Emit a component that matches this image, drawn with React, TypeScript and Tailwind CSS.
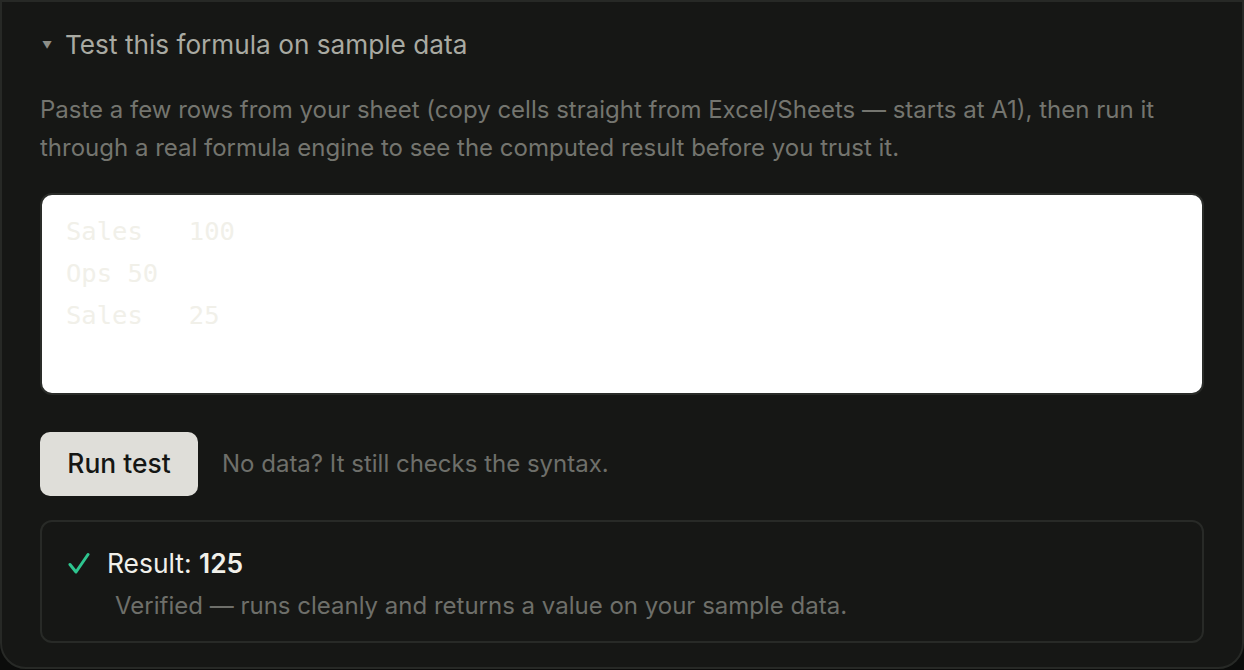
import React from "react";

export default function App() {
  return (
    <div className="w-[1244px] h-[670px] bg-[#0b0c0b] overflow-hidden" style={{ fontFamily: "Inter, 'Noto Sans', sans-serif" }}>
      <div className="h-[669px] bg-[#161715] border-2 border-[#272926] rounded-b-[26px] px-[38px] pt-[28px]">
        <div className="flex items-center h-[30px]">
          <span className="text-[#8d8e88] text-[10px] leading-none w-[25px] pl-[2px]">▼</span>
          <span className="text-[26.2px] leading-[30px] text-[#a9aaa2]">Test this formula on sample data</span>
        </div>
        <p className="mt-[31px] text-[24px] leading-[38px] text-[#74756f]">
          Paste a few rows from your sheet (copy cells straight from Excel/Sheets — starts at A1), then run it through a real formula engine to see the computed result before you trust it.
        </p>
        <div className="mt-[26px] h-[202px] bg-white border-2 border-[#2a2c29] rounded-[12px] pl-[24px] pt-[15px]">
          <pre
            className="text-[25.5px] leading-[42px] text-[#f1f0e9] m-0"
            style={{ fontFamily: "'DejaVu Sans Mono', monospace", tabSize: 8 }}
          >{"Sales\t100\nOps 50\nSales\t25"}</pre>
        </div>
        <div className="mt-[37px] flex items-center">
          <button className="h-[64px] w-[158px] rounded-[10px] bg-[#dfded9] text-[26.4px] text-[#151614] font-medium">
            Run test
          </button>
          <span className="ml-[24px] text-[24px] text-[#6e6f6a]">No data? It still checks the syntax.</span>
        </div>
        <div className="mt-[24px] h-[123px] border-2 border-[#282a27] rounded-[12px] pl-[26px] pt-[26px]">
          <div className="flex items-center h-[30px]">
            <svg width="22" height="22" viewBox="0 0 22 22" fill="none" stroke="#2ec58f" strokeWidth="3" strokeLinecap="round" strokeLinejoin="round">
              <path d="M2 12.5l6 7.5L20 2.5" />
            </svg>
            <span className="ml-[17px] text-[26.4px] leading-[30px] text-[#f1f0ea]">
              Result: <span className="font-semibold">125</span>
            </span>
          </div>
          <div className="mt-[13px] ml-[47px] text-[24px] leading-[30px] text-[#6e6f6a]">
            Verified — runs cleanly and returns a value on your sample data.
          </div>
        </div>
      </div>
    </div>
  );
}
